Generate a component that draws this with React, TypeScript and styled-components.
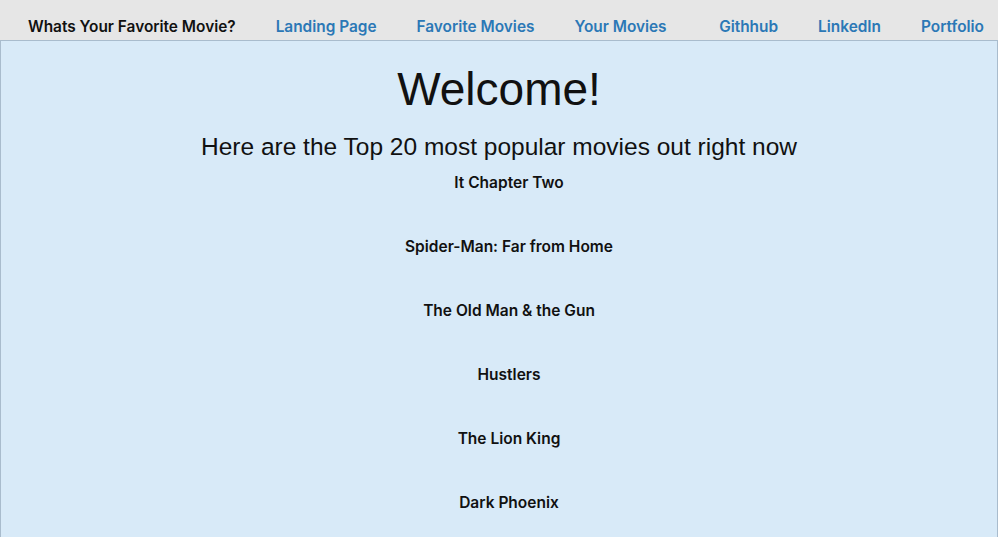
import React from "react";
import styled, { createGlobalStyle } from "styled-components";

const Global = createGlobalStyle`
  html, body { margin: 0; padding: 0; background: #d8eaf8; }
  body { font-family: Inter, "Noto Sans", sans-serif; }
`;

const Nav = styled.nav`
  display: flex;
  align-items: center;
  height: 40px;
  box-sizing: border-box;
  padding: 12px 14px 0 28px;
  background: #e6e6e6;
`;

const Brand = styled.span`
  font-family: Inter, sans-serif;
  font-weight: 600;
  font-size: 15.4px;
  color: #111;
  margin-right: 40px;
`;

const NavLink = styled.a<{ $push?: boolean }>`
  font-family: Inter, sans-serif;
  font-weight: 600;
  font-size: 15.4px;
  color: #2b78b6;
  text-decoration: none;
  margin-right: 40px;
  margin-left: ${(p) => (p.$push ? "auto" : "0")};
  &:last-child { margin-right: 0; }
`;

const Main = styled.main`
  border: 1px solid #a9bccd;
  border-bottom: none;
  background: #d8eaf8;
  height: 497px;
  overflow: hidden;
  box-sizing: border-box;
  text-align: center;
`;

const Title = styled.h1`
  font-family: "Liberation Sans", Arial, sans-serif;
  font-weight: 400;
  font-size: 46px;
  color: #111;
  margin: 20px 0 0;
  line-height: 56px;
`;

const Subtitle = styled.h2`
  font-family: "Liberation Sans", Arial, sans-serif;
  font-weight: 400;
  font-size: 24.5px;
  color: #111;
  margin: 15px 0 0;
  line-height: 30px;
`;

const List = styled.ul`
  list-style: none;
  margin: 0;
  padding: 0 0 0 20px;
`;

const Movie = styled.li`
  font-family: Inter, sans-serif;
  font-weight: 600;
  font-size: 15.5px;
  color: #111;
  height: 64px;
  line-height: 20px;
  padding-top: 11px;
  box-sizing: border-box;
`;

const movies = [
  "It Chapter Two",
  "Spider-Man: Far from Home",
  "The Old Man & the Gun",
  "Hustlers",
  "The Lion King",
  "Dark Phoenix",
];

export default function App() {
  return (
    <>
      <Global />
      <Nav>
        <Brand>Whats Your Favorite Movie?</Brand>
        <NavLink href="#">Landing Page</NavLink>
        <NavLink href="#">Favorite Movies</NavLink>
        <NavLink href="#">Your Movies</NavLink>
        <NavLink href="#" $push>Githhub</NavLink>
        <NavLink href="#">LinkedIn</NavLink>
        <NavLink href="#">Portfolio</NavLink>
      </Nav>
      <Main>
        <Title>Welcome!</Title>
        <Subtitle>Here are the Top 20 most popular movies out right now</Subtitle>
        <List>
          {movies.map((m) => (
            <Movie key={m}>{m}</Movie>
          ))}
        </List>
      </Main>
    </>
  );
}
